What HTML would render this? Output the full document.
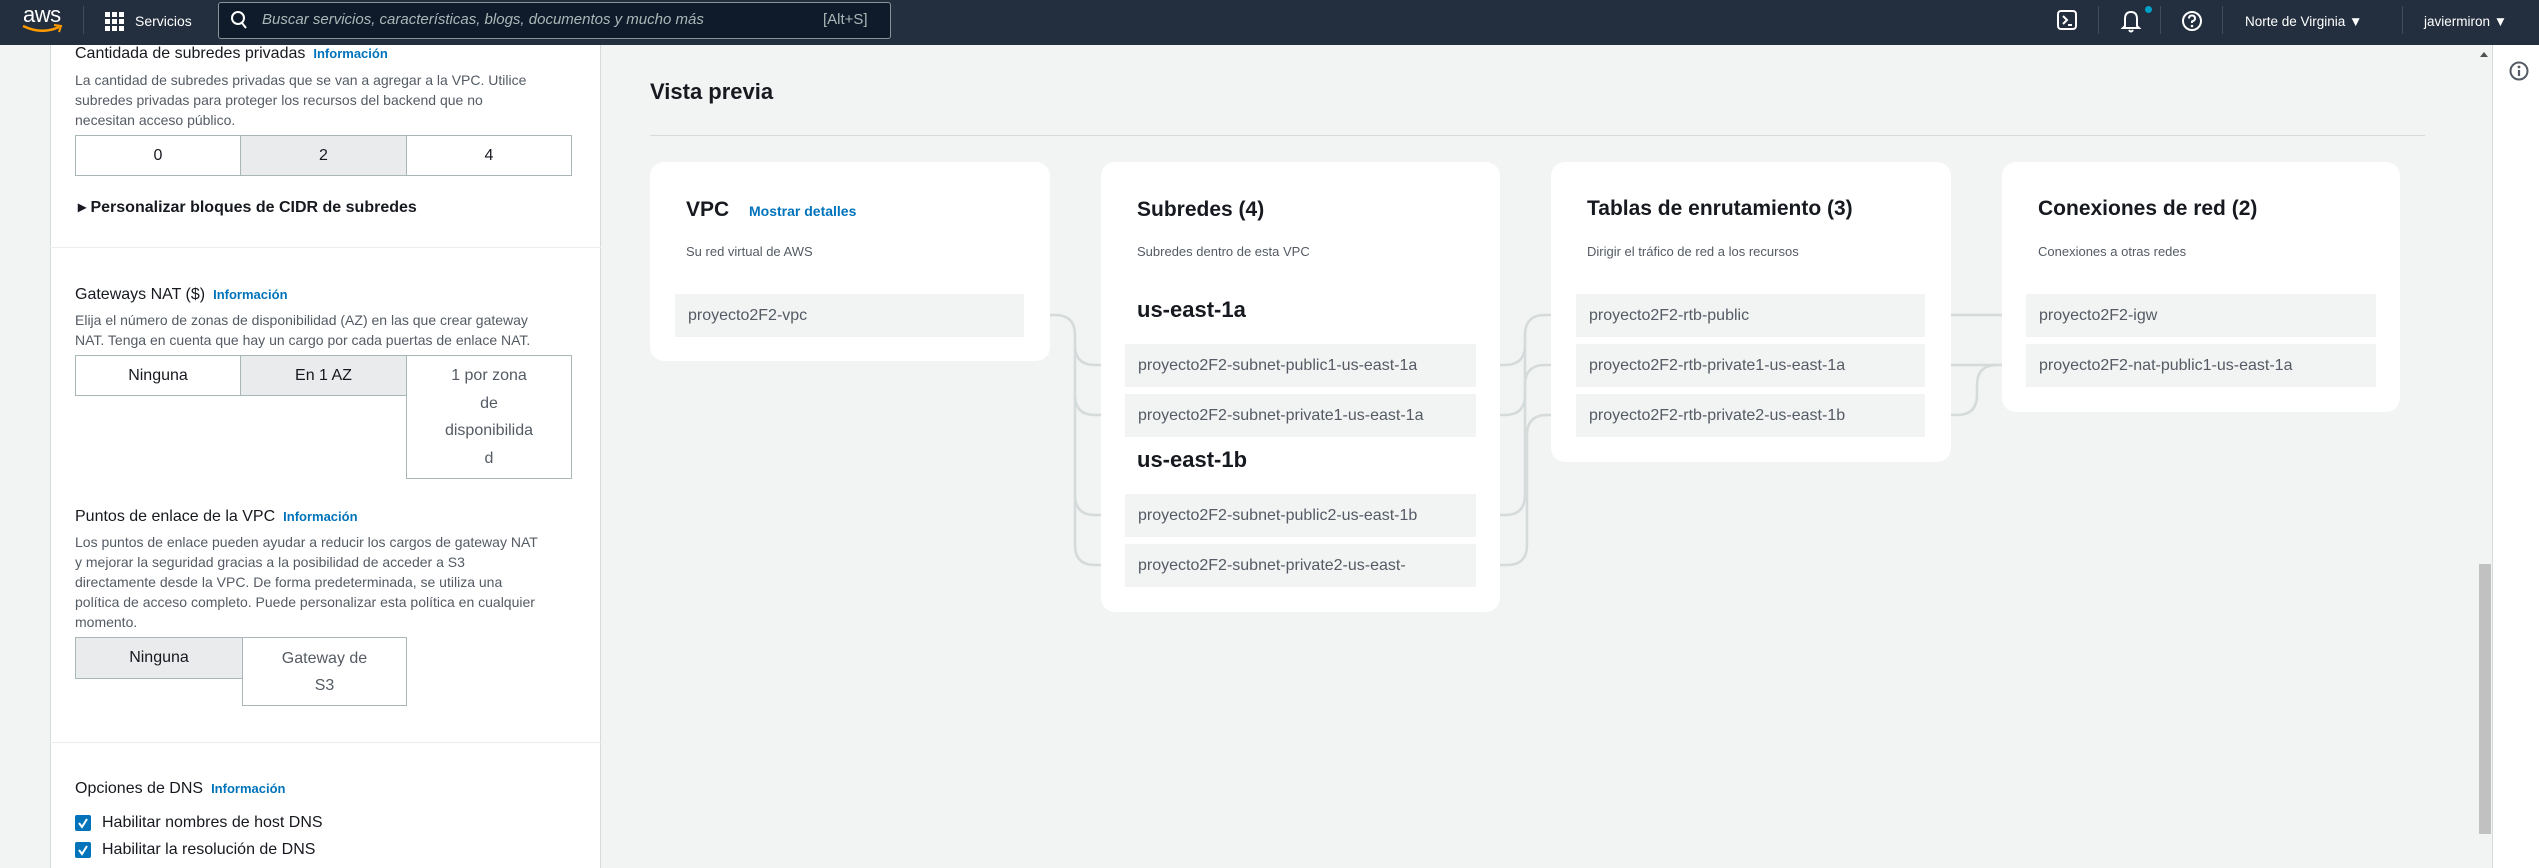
<!DOCTYPE html>
<html><head><meta charset="utf-8"><style>
*{margin:0;padding:0;box-sizing:border-box}
body{width:2539px;height:868px;overflow:hidden;background:#f2f3f3;font-family:"Liberation Sans",sans-serif;position:relative;color:#16191f}
.a{position:absolute;white-space:nowrap}
.nav{position:absolute;left:0;top:0;width:2539px;height:45px;background:#232f3e}
.sep{position:absolute;top:6px;width:1px;height:28px;background:#414d5c}
.lbl{font-size:16px;color:#16191f}
.info{font-size:13px;font-weight:bold;color:#0073bb;margin-left:8px}
.desc{font-size:14px;color:#545b64;line-height:20px}
.seg{position:absolute;border:1px solid #aab7b8;background:#fff;font-size:16px;color:#16191f;text-align:center}
.sel{background:#e9ebed}
.card{position:absolute;background:#fff;border-radius:14px}
.ct{position:absolute;font-size:21px;font-weight:bold}
.cd{position:absolute;font-size:13px;color:#545b64}
.it{position:absolute;background:#f2f3f3;font-size:16px;color:#545b64;padding-left:13px;line-height:43px;height:43px;overflow:hidden;white-space:nowrap}
.cb{position:absolute;width:16px;height:16px;background:#0073bb;border-radius:2px}
</style></head><body>
<div class="nav">
 <div class="a" style="left:23px;top:2px;font-size:22px;color:#fff;letter-spacing:-0.5px">aws</div>
 <svg class="a" style="left:22px;top:23px" width="42" height="12"><path d="M1 3 Q20 12 37 4" stroke="#f90" stroke-width="2.5" fill="none"/><path d="M32 2 L39 3 L37 9" stroke="#f90" stroke-width="2" fill="none"/></svg>
 <div class="sep" style="left:83px"></div>
 <svg class="a" style="left:105px;top:12px" width="20" height="20" fill="#fff"><rect x="0" y="0" width="5" height="5"/><rect x="7" y="0" width="5" height="5"/><rect x="14" y="0" width="5" height="5"/><rect x="0" y="7" width="5" height="5"/><rect x="7" y="7" width="5" height="5"/><rect x="14" y="7" width="5" height="5"/><rect x="0" y="14" width="5" height="5"/><rect x="7" y="14" width="5" height="5"/><rect x="14" y="14" width="5" height="5"/></svg>
 <div class="a" style="left:135px;top:13px;font-size:14px;color:#fff">Servicios</div>
 <div class="a" style="left:218px;top:2px;width:673px;height:37px;border:1px solid #879596;border-radius:3px;background:#0f1b2a"></div>
 <svg class="a" style="left:230px;top:10px" width="18" height="20"><circle cx="8" cy="8" r="6" stroke="#fff" stroke-width="2" fill="none"/><path d="M12 13 L16 18" stroke="#fff" stroke-width="2"/></svg>
 <div class="a" style="left:262px;top:11px;font-size:15px;font-style:italic;color:#aab7b8">Buscar servicios, características, blogs, documentos y mucho más</div>
 <div class="a" style="left:823px;top:11px;font-size:15px;color:#aab7b8">[Alt+S]</div>
 <svg class="a" style="left:2057px;top:10px" width="22" height="22"><rect x="1" y="1" width="18" height="18" rx="3" stroke="#fff" stroke-width="2" fill="none"/><path d="M6 6 L10 10 L6 14 M11 15 H15" stroke="#fff" stroke-width="2" fill="none"/></svg>
 <div class="sep" style="left:2098px"></div>
 <svg class="a" style="left:2120px;top:9px" width="22" height="24"><path d="M5 17 V10 Q5 3 11 3 Q17 3 17 10 V17 L19 19 H3 Z M9 21 Q11 24 13 21" stroke="#fff" stroke-width="2" fill="none"/></svg>
 <div class="a" style="left:2145px;top:6px;width:7px;height:7px;border-radius:50%;background:#00a1c9"></div>
 <div class="sep" style="left:2160px"></div>
 <svg class="a" style="left:2181px;top:10px" width="22" height="22"><circle cx="11" cy="11" r="9" stroke="#fff" stroke-width="2" fill="none"/><path d="M8 8.5 Q8 5.5 11 5.5 Q14 5.5 14 8.5 Q14 10.5 11 11.5 V13" stroke="#fff" stroke-width="2" fill="none"/><circle cx="11" cy="16" r="1.3" fill="#fff"/></svg>
 <div class="sep" style="left:2222px"></div>
 <div class="a" style="left:2245px;top:14px;font-size:13.5px;color:#fff">Norte de Virginia ▼</div>
 <div class="sep" style="left:2402px"></div>
 <div class="a" style="left:2424px;top:14px;font-size:13.5px;color:#fff">javiermiron ▼</div>
</div>

<div class="a" style="left:50px;top:45px;width:551px;height:823px;background:#fff;border-left:1px solid #d5dbdb;border-right:1px solid #d5dbdb"></div>
<div class="a" style="left:50px;top:247px;width:551px;height:1px;background:#eaeded"></div>
<div class="a" style="left:50px;top:742px;width:551px;height:1px;background:#eaeded"></div>

<div class="a" style="left:75px;top:45px"><span class="lbl">Cantidada de subredes privadas</span><span class="info">Información</span></div>
<div class="a desc" style="left:75px;top:70px">La cantidad de subredes privadas que se van a agregar a la VPC. Utilice<br>subredes privadas para proteger los recursos del backend que no<br>necesitan acceso público.</div>
<div class="seg" style="left:75px;top:135px;width:166px;height:41px;line-height:39px">0</div>
<div class="seg sel" style="left:240px;top:135px;width:167px;height:41px;line-height:39px">2</div>
<div class="seg" style="left:406px;top:135px;width:166px;height:41px;line-height:39px">4</div>
<div class="a" style="left:78px;top:197px;font-size:16px;font-weight:bold;color:#16191f">▸ Personalizar bloques de CIDR de subredes</div>

<div class="a" style="left:75px;top:286px"><span class="lbl">Gateways NAT ($)</span><span class="info">Información</span></div>
<div class="a desc" style="left:75px;top:310px">Elija el número de zonas de disponibilidad (AZ) en las que crear gateway<br>NAT. Tenga en cuenta que hay un cargo por cada puertas de enlace NAT.</div>
<div class="seg" style="left:75px;top:355px;width:166px;height:41px;line-height:39px">Ninguna</div>
<div class="seg sel" style="left:240px;top:355px;width:167px;height:41px;line-height:39px">En 1 AZ</div>
<div class="seg" style="left:406px;top:355px;width:166px;height:124px;line-height:27.5px;padding-top:6px;color:#545b64">1 por zona<br>de<br>disponibilida<br>d</div>

<div class="a" style="left:75px;top:508px"><span class="lbl">Puntos de enlace de la VPC</span><span class="info">Información</span></div>
<div class="a desc" style="left:75px;top:532px">Los puntos de enlace pueden ayudar a reducir los cargos de gateway NAT<br>y mejorar la seguridad gracias a la posibilidad de acceder a S3<br>directamente desde la VPC. De forma predeterminada, se utiliza una<br>política de acceso completo. Puede personalizar esta política en cualquier<br>momento.</div>
<div class="seg sel" style="left:75px;top:637px;width:168px;height:42px;line-height:40px">Ninguna</div>
<div class="seg" style="left:242px;top:637px;width:165px;height:69px;line-height:27px;padding-top:7px;color:#545b64">Gateway de<br>S3</div>

<div class="a" style="left:75px;top:780px"><span class="lbl">Opciones de DNS</span><span class="info">Información</span></div>
<div class="cb" style="left:75px;top:815px"></div>
<div class="cb" style="left:75px;top:842px"></div>
<svg class="a" style="left:75px;top:815px" width="16" height="44"><path d="M4 8 L7 12 L12 4 M4 35 L7 39 L12 31" stroke="#fff" stroke-width="2" fill="none"/></svg>
<div class="a" style="left:102px;top:814px;font-size:16px">Habilitar nombres de host DNS</div>
<div class="a" style="left:102px;top:841px;font-size:16px">Habilitar la resolución de DNS</div>

<div class="a" style="left:650px;top:79px;font-size:22px;font-weight:bold">Vista previa</div>
<div class="a" style="left:650px;top:135px;width:1775px;height:1px;background:#d5dbdb"></div>

<svg class="a" style="left:0;top:0" width="2539" height="868"><g stroke="#d5dbdb" stroke-width="2.5" fill="none">
<path d="M1024 315 H1055 Q1075 315 1075 335 V345 Q1075 365 1095 365 H1125"/>
<path d="M1075 345 V395 Q1075 415 1095 415 H1125"/>
<path d="M1075 395 V495 Q1075 515 1095 515 H1125"/>
<path d="M1075 495 V545 Q1075 565 1095 565 H1125"/>
<path d="M1476 365 H1505 Q1525 365 1525 345 V335 Q1525 315 1545 315 H1576"/>
<path d="M1476 515 H1505 Q1525 515 1525 495 V335"/>
<path d="M1476 415 H1505 Q1525 415 1525 395 V385 Q1525 365 1545 365 H1576"/>
<path d="M1476 565 H1507 Q1527 565 1527 545 V435 Q1527 415 1547 415 H1576"/>
<path d="M1925 315 H2026"/>
<path d="M1925 365 H2026"/>
<path d="M1925 415 H1957 Q1977 415 1977 395 V385 Q1977 365 1997 365"/>
</g></svg>

<div class="card" style="left:650px;top:162px;width:400px;height:199px"></div>
<div class="ct" style="left:686px;top:198px">VPC</div>
<div class="a" style="left:749px;top:203px;font-size:14px;font-weight:bold;color:#0073bb">Mostrar detalles</div>
<div class="cd" style="left:686px;top:244px">Su red virtual de AWS</div>
<div class="it" style="left:675px;top:294px;width:349px">proyecto2F2-vpc</div>

<div class="card" style="left:1101px;top:162px;width:399px;height:450px"></div>
<div class="ct" style="left:1137px;top:198px">Subredes (4)</div>
<div class="cd" style="left:1137px;top:244px">Subredes dentro de esta VPC</div>
<div class="a" style="left:1137px;top:297px;font-size:22px;font-weight:bold">us-east-1a</div>
<div class="it" style="left:1125px;top:344px;width:351px">proyecto2F2-subnet-public1-us-east-1a</div>
<div class="it" style="left:1125px;top:394px;width:351px">proyecto2F2-subnet-private1-us-east-1a</div>
<div class="a" style="left:1137px;top:447px;font-size:22px;font-weight:bold">us-east-1b</div>
<div class="it" style="left:1125px;top:494px;width:351px">proyecto2F2-subnet-public2-us-east-1b</div>
<div class="it" style="left:1125px;top:544px;width:351px">proyecto2F2-subnet-private2-us-east-</div>

<div class="card" style="left:1551px;top:162px;width:400px;height:300px"></div>
<div class="ct" style="left:1587px;top:197px">Tablas de enrutamiento (3)</div>
<div class="cd" style="left:1587px;top:244px">Dirigir el tráfico de red a los recursos</div>
<div class="it" style="left:1576px;top:294px;width:349px">proyecto2F2-rtb-public</div>
<div class="it" style="left:1576px;top:344px;width:349px">proyecto2F2-rtb-private1-us-east-1a</div>
<div class="it" style="left:1576px;top:394px;width:349px">proyecto2F2-rtb-private2-us-east-1b</div>

<div class="card" style="left:2002px;top:162px;width:398px;height:250px"></div>
<div class="ct" style="left:2038px;top:197px">Conexiones de red (2)</div>
<div class="cd" style="left:2038px;top:244px">Conexiones a otras redes</div>
<div class="it" style="left:2026px;top:294px;width:350px">proyecto2F2-igw</div>
<div class="it" style="left:2026px;top:344px;width:350px">proyecto2F2-nat-public1-us-east-1a</div>

<div class="a" style="left:2479px;top:564px;width:12px;height:270px;background:#c1c1c1"></div>
<div class="a" style="left:2480px;top:52px;width:0;height:0;border-left:4px solid transparent;border-right:4px solid transparent;border-bottom:5px solid #505050"></div>
<div class="a" style="left:2492px;top:45px;width:47px;height:823px;background:#fff;border-left:1px solid #d5dbdb"></div>
<svg class="a" style="left:2508px;top:60px" width="22" height="22"><circle cx="11" cy="11" r="8.5" stroke="#545b64" stroke-width="2" fill="none"/><circle cx="11" cy="7" r="1.4" fill="#545b64"/><path d="M11 10 V16" stroke="#545b64" stroke-width="2.2"/></svg>
</body></html>
